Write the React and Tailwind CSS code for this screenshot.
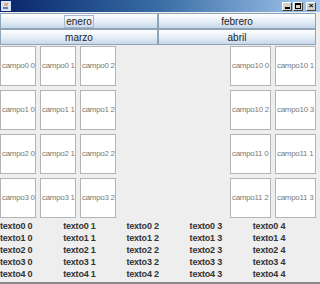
import React from 'react';

const font = { fontFamily: '"Liberation Sans", Arial, sans-serif' };

function TitleBar() {
  return (
    <div className="flex h-[12px] items-center bg-gradient-to-r from-[#0a246a] via-[#3a6ea5] to-[#a6caf0] pl-[1px] pr-[4px]">
      <div className="flex h-[10px] w-[10px] items-center justify-center bg-[#d8e4f0]">
        <svg width="8" height="8" viewBox="0 0 8 8">
          <path d="M1 5h5v2H1z" fill="#5a7fb0" />
          <path d="M3 1c1 1-1 2 0 3M5 1c1 1-1 2 0 3" stroke="#e06020" strokeWidth="1" fill="none" />
        </svg>
      </div>
      <div className="flex-1" />
      <div className="flex gap-[1px]">
        <div className="flex h-[9px] w-[10px] items-end justify-center border border-t-white border-l-white border-r-[#404040] border-b-[#404040] bg-[#d4d0c8] pb-[1px]">
          <div className="h-[2px] w-[5px] bg-black" />
        </div>
        <div className="mr-[2px] flex h-[9px] w-[10px] items-center justify-center border border-t-white border-l-white border-r-[#404040] border-b-[#404040] bg-[#d4d0c8]">
          <div className="h-[6px] w-[6px] border border-t-2 border-black" />
        </div>
        <div className="flex h-[9px] w-[10px] items-center justify-center border border-t-white border-l-white border-r-[#404040] border-b-[#404040] bg-[#d4d0c8] text-[8px] font-bold leading-none text-black">
          ×
        </div>
      </div>
    </div>
  );
}

function MonthButton({ label, focused }) {
  return (
    <div className="flex h-[16px] flex-1 items-center justify-center border border-[#8ea2b8] bg-gradient-to-b from-white via-[#e8eff7] to-[#c6d7ea] text-[10px] text-[#222]">
      <span className={focused ? 'border border-[#a8b8cc] px-[1px] leading-[11px]' : 'leading-[11px]'}>{label}</span>
    </div>
  );
}

function Campo({ text, w }) {
  return (
    <div className={`flex h-[40px] ${w} items-center overflow-hidden border border-[#b4b4b4] bg-white pl-[1px]`}>
      <span className="whitespace-nowrap text-[8px] tracking-[-0.3px] text-[#7a7a7a]">{text}</span>
    </div>
  );
}

export default function App() {
  const rows = [0, 1, 2, 3];
  const right = [
    ['campo10 0', 'campo10 1'],
    ['campo10 2', 'campo10 3'],
    ['campo11 0', 'campo11 1'],
    ['campo11 2', 'campo11 3'],
  ];
  return (
    <div className="flex h-[284px] w-[320px] flex-col overflow-hidden bg-[#eeeeee]" style={font}>
      <TitleBar />
      <div className="w-[316px] flex-1">
        <div className="mt-[1px] flex">
          <MonthButton label="enero" focused />
          <MonthButton label="febrero" />
        </div>
        <div className="flex">
          <MonthButton label="marzo" />
          <MonthButton label="abril" />
        </div>
        <div className="flex pt-[1px]">
          <div className="flex flex-col gap-[4px]">
            {rows.map((r) => (
              <div key={r} className="flex gap-[4px]">
                <Campo text={`campo${r} 0`} w="w-[36px]" />
                <Campo text={`campo${r} 1`} w="w-[36px]" />
                <Campo text={`campo${r} 2`} w="w-[36px]" />
              </div>
            ))}
          </div>
          <div className="flex-1" />
          <div className="flex flex-col gap-[4px]">
            {right.map((pair, i) => (
              <div key={i} className="flex gap-[4px]">
                <Campo text={pair[0]} w="w-[41px]" />
                <Campo text={pair[1]} w="w-[41px]" />
              </div>
            ))}
          </div>
        </div>
        <div className="mt-[2px] grid grid-cols-5">
          {[0, 1, 2, 3, 4].map((r) =>
            [0, 1, 2, 3, 4].map((c) => (
              <div key={`${r}-${c}`} className="h-[12px] whitespace-nowrap text-[9px] font-bold leading-[12px] tracking-[-0.2px] text-[#333]">
                {`texto${r} ${c}`}
              </div>
            ))
          )}
        </div>
      </div>
      <div className="h-[2px] bg-[#8a8a8a]" />
    </div>
  );
}
